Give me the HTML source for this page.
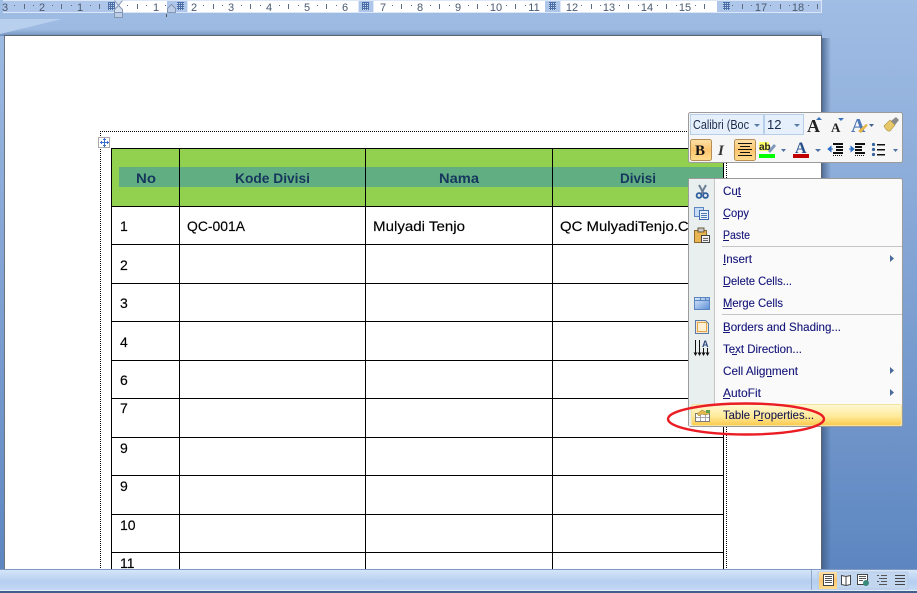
<!DOCTYPE html>
<html><head><meta charset="utf-8"><style>
html,body{margin:0;padding:0;width:917px;height:593px;overflow:hidden;background:#9db9e2}
svg{display:block;position:absolute;left:0;top:0}
text{font-family:"Liberation Sans",sans-serif}
.r{font-size:11px;fill:#4a5a70;text-anchor:middle}
.c{font-size:14px;fill:#000;stroke:#000;stroke-width:.15}
.h{font-size:14px;font-weight:bold;fill:#17365d}
.m{font-size:12px;fill:#15157a;stroke:#15157a;stroke-width:.12}
.x{shape-rendering:crispEdges}
</style></head><body>
<svg width="917" height="593" viewBox="0 0 917 593" xmlns="http://www.w3.org/2000/svg">
<defs>
<linearGradient id="bg" x1="0" y1="0" x2="0" y2="1"><stop offset="0" stop-color="#a0bde4"/><stop offset=".5" stop-color="#7fa1d2"/><stop offset="1" stop-color="#5a84bf"/></linearGradient>
<linearGradient id="st" x1="0" y1="0" x2="0" y2="1"><stop offset="0" stop-color="#d6e5f8"/><stop offset=".5" stop-color="#b5cff0"/><stop offset="1" stop-color="#c8dcf6"/></linearGradient>
<linearGradient id="hl" x1="0" y1="0" x2="0" y2="1"><stop offset="0" stop-color="#fff8d4"/><stop offset=".55" stop-color="#ffeb9c"/><stop offset="1" stop-color="#fbc94c"/></linearGradient>
<linearGradient id="btn" x1="0" y1="0" x2="0" y2="1"><stop offset="0" stop-color="#fde0a8"/><stop offset=".5" stop-color="#fcc56f"/><stop offset="1" stop-color="#ffdc8e"/></linearGradient>
<linearGradient id="ic" x1="0" y1="0" x2="1" y2="1"><stop offset="0" stop-color="#dfeafa"/><stop offset="1" stop-color="#5c8fd8"/></linearGradient>
<linearGradient id="shd" x1="0" y1="0" x2="1" y2="0"><stop offset="0" stop-color="#3e5a82" stop-opacity=".75"/><stop offset="1" stop-color="#3e5a82" stop-opacity="0"/></linearGradient>
<linearGradient id="shb" x1="0" y1="0" x2="0" y2="1"><stop offset="0" stop-color="#84a2cc" stop-opacity="0"/><stop offset="1" stop-color="#6d8cb8"/></linearGradient>
<pattern id="gp" width="2" height="2" patternUnits="userSpaceOnUse"><rect width="2" height="2" fill="#4a6ea5"/><rect width="1" height="1" x="1" y="1" fill="#c5d6ee"/></pattern>
</defs>

<!-- background -->
<rect width="917" height="593" fill="url(#bg)"/>
<rect x="0" y="29" width="822" height="7" fill="url(#shb)"/>
<polygon points="0,19 62,19 0,34" fill="#b9cfee"/>

<!-- ruler -->
<g class="x">
<rect x="3" y="0" width="819" height="13" fill="#dbe7f7"/>
<rect x="3" y="1" width="112" height="11" fill="#aec6ea"/>
<rect x="120" y="1" width="47" height="11" fill="#fff"/>
<rect x="167" y="1" width="20" height="11" fill="#aec6ea"/>
<rect x="188" y="1" width="170" height="11" fill="#fff"/>
<rect x="359" y="1" width="14" height="11" fill="#aec6ea"/>
<rect x="374" y="1" width="171" height="11" fill="#fff"/>
<rect x="545" y="1" width="15" height="11" fill="#aec6ea"/>
<rect x="561" y="1" width="156" height="11" fill="#fff"/>
<rect x="717" y="1" width="104" height="11" fill="#aec6ea"/>
</g>
<text class="r" x="5" y="11">3</text><text class="r" x="42" y="11">2</text><text class="r" x="80" y="11">1</text>
<text class="r" x="156" y="11">1</text><text class="r" x="194" y="11">2</text><text class="r" x="231" y="11">3</text><text class="r" x="269" y="11">4</text><text class="r" x="307" y="11">5</text><text class="r" x="345" y="11">6</text>
<text class="r" x="383" y="11">7</text><text class="r" x="420" y="11">8</text><text class="r" x="458" y="11">9</text><text class="r" x="496" y="11">10</text><text class="r" x="534" y="11">11</text>
<text class="r" x="572" y="11">12</text><text class="r" x="609" y="11">13</text><text class="r" x="647" y="11">14</text><text class="r" x="685" y="11">15</text>
<text class="r" x="761" y="11">17</text><text class="r" x="798" y="11">18</text>
<path class="x" d="M24.500 4v5M61.500 4v5M99.500 4v5M137.500 4v5M213.500 4v5M250.500 4v5M288.500 4v5M326.500 4v5M401.500 4v5M439.500 4v5M477.500 4v5M515.500 4v5M591.500 4v5M628.500 4v5M666.500 4v5M704.500 4v5M742.500 4v5M780.500 4v5M817.500 4v5" stroke="#5d6b80"/>
<path class="x" d="M14 5.500h1M33 5.500h1M52 5.500h1M71 5.500h1M90 5.500h1M127 5.500h1M146 5.500h1M165 5.500h1M203 5.500h1M222 5.500h1M241 5.500h1M260 5.500h1M279 5.500h1M298 5.500h1M317 5.500h1M336 5.500h1M392 5.500h1M411 5.500h1M430 5.500h1M449 5.500h1M468 5.500h1M487 5.500h1M506 5.500h1M525 5.500h1M581 5.500h1M600 5.500h1M619 5.500h1M638 5.500h1M657 5.500h1M676 5.500h1M695 5.500h1M732 5.500h1M751 5.500h1M770 5.500h1M789 5.500h1M808 5.500h1" stroke="#5d6b80"/>
<g class="x" fill="url(#gp)">
<rect x="108" y="2" width="7" height="8"/>
<rect x="177" y="2" width="7" height="8"/>
<rect x="362" y="2" width="7" height="8"/>
<rect x="549" y="2" width="7" height="8"/>
<rect x="723" y="2" width="7" height="8"/>
</g>
<path d="M114.500 0.500l4 5 4-5M114.500 12.500v-3l4-4 4 4v3z" fill="#d5e0f0" stroke="#8496b2"/>
<rect x="114.500" y="12.500" width="8" height="5" fill="#bccde6" stroke="#8496b2"/>
<path d="M167.500 12.500v-4l4-4 4 4v4z" fill="#bccde6" stroke="#8496b2"/>
<path class="x" d="M166.500 14v3" stroke="#555"/>

<!-- page -->
<rect x="822" y="38" width="9" height="532" fill="url(#shd)"/>
<rect x="4.500" y="35.500" width="817" height="540" fill="#fff" stroke="#5c6470"/>
<rect x="4" y="37" width="1" height="533" fill="#6d7480"/>

<!-- table selection dotted frame -->
<path class="x" d="M100 131.500H727M100.500 131V570M726.500 131V570" fill="none" stroke="#000" stroke-width="1" stroke-dasharray="1 1"/>
<rect x="98.500" y="137.500" width="11" height="10" fill="#fff" stroke="#a9a9a9"/>
<path class="x" d="M104.500 138v9M100 142.500h9M103 139.500h3M103 145.500h3M101.500 141v3M107.500 141v3" stroke="#3a6fcf" stroke-width="1" fill="none"/>

<!-- table -->
<g class="x">
<rect x="112" y="149" width="612" height="57" fill="#92d050"/>
<rect x="119" y="167" width="605" height="20" fill="#60ae82"/>
<path d="M111 148.500H724M111 206.500H724M111 244.500H724M111 283.500H724M111 321.500H724M111 360.500H724M111 398.500H724M111 437.500H724M111 475.500H724M111 514.500H724M111 552.500H724M111.500 148V570M179.500 148V570M365.500 148V570M552.500 148V570M723.500 148V570" stroke="#000" stroke-width="1" fill="none"/>
</g>
<text class="h" x="136" y="183" textLength="20" lengthAdjust="spacingAndGlyphs">No</text>
<text class="h" x="235" y="183" textLength="75" lengthAdjust="spacingAndGlyphs">Kode Divisi</text>
<text class="h" x="439" y="183" textLength="40" lengthAdjust="spacingAndGlyphs">Nama</text>
<text class="h" x="620" y="183" textLength="36" lengthAdjust="spacingAndGlyphs">Divisi</text>
<text class="c" x="120" y="231">1</text>
<text class="c" x="187" y="231" textLength="58" lengthAdjust="spacingAndGlyphs">QC-001A</text>
<text class="c" x="373" y="231" textLength="92" lengthAdjust="spacingAndGlyphs">Mulyadi Tenjo</text>
<text class="c" x="560" y="231" textLength="137" lengthAdjust="spacingAndGlyphs">QC MulyadiTenjo.Co</text>
<text class="c" x="120" y="270">2</text>
<text class="c" x="120" y="308">3</text>
<text class="c" x="120" y="347">4</text>
<text class="c" x="120" y="385">6</text>
<text class="c" x="120" y="413">7</text>
<text class="c" x="120" y="453">9</text>
<text class="c" x="120" y="491">9</text>
<text class="c" x="120" y="530">10</text>
<text class="c" x="120" y="568">11</text>

<!-- mini toolbar -->
<rect x="688.500" y="112.500" width="214" height="50" rx="2" fill="#f6f6f6" stroke="#9b9b9b"/>
<rect x="690.500" y="114.500" width="73" height="20" fill="#e5f0fc" stroke="#b8cfe9"/>
<rect x="764.500" y="114.500" width="39" height="20" fill="#e5f0fc" stroke="#b8cfe9"/>
<text x="693" y="129" style="font-size:12.500px;fill:#1c2a4a" textLength="56" lengthAdjust="spacingAndGlyphs">Calibri (Boc</text>
<text x="767" y="129" style="font-size:13px;fill:#1c2a4a">12</text>
<path d="M754 124h6l-3 3zM794 124h6l-3 3z" fill="#5b7ca6"/>
<text x="807" y="132" style="font-family:'Liberation Serif',serif;font-size:18px;font-weight:bold;fill:#222">A</text>
<path d="M816 120h6l-3-3z" fill="#3c70b8"/>
<text x="831" y="132" style="font-family:'Liberation Serif',serif;font-size:13px;font-weight:bold;fill:#222">A</text>
<path d="M838 118h6l-3 3z" fill="#3c70b8"/>
<text x="851" y="132" style="font-family:'Liberation Serif',serif;font-size:20px;font-weight:bold;fill:#4c78b8">A</text>
<path d="M858 131l8-7 2 1-7 8z" fill="#e5b54a"/>
<path d="M869 124h5l-2.500 3z" fill="#44618c"/>
<!-- brush -->
<path d="M884 126l6-6 5 5-5 6q-3 1-6-5z" fill="#e6c868" stroke="#a88c3c" stroke-width=".6"/>
<path d="M891 121l5-4 3 3-4 5z" fill="#8a8a8a"/>

<rect x="690.500" y="139.500" width="21" height="21" rx="2" fill="url(#btn)" stroke="#b58e55"/>
<text x="695" y="155" style="font-family:'Liberation Serif',serif;font-size:15px;font-weight:bold;fill:#111">B</text>
<text x="718" y="155" style="font-family:'Liberation Serif',serif;font-size:15px;font-style:italic;font-weight:bold;fill:#333">I</text>
<rect x="734.500" y="139.500" width="21" height="21" rx="2" fill="url(#btn)" stroke="#b58e55"/>
<path class="x" d="M738 143.500h14M740 146.500h10M738 149.500h14M740 152.500h10M738 155.500h14" stroke="#111"/>
<rect x="759" y="142" width="10" height="9" fill="#ffff66"/>
<text x="759" y="150" style="font-size:10px;font-weight:bold;fill:#222">ab</text>
<path d="M768 151l6-7 2 2-6 7z" fill="#7c96b8"/>
<rect x="759" y="154" width="16" height="4" fill="#00ff00"/>
<path d="M781 149h5l-2.500 3zM815 149h6l-3 3zM893 149h5l-2.500 3z" fill="#4f72a4"/>
<text x="795" y="153" style="font-family:'Liberation Serif',serif;font-size:16px;font-weight:bold;fill:#27508a">A</text>
<rect x="793" y="154" width="16" height="4" fill="#c00000"/>
<path class="x" d="M833 144h10M836 147h7M836 150h7M833 153h10" stroke="#111" stroke-width="2"/>
<path class="x" d="M833 155.500h10" stroke="#111" stroke-dasharray="1 1"/>
<path d="M828 149h5M828 149l3-2.500v5z" stroke="#2d6fc4" fill="#2d6fc4"/>
<path class="x" d="M855 144h10M855 147h7M855 150h7M855 153h10" stroke="#111" stroke-width="2"/>
<path class="x" d="M855 155.500h10" stroke="#111" stroke-dasharray="1 1"/>
<path d="M849 149h5M854 149l-3-2.500v5z" stroke="#2d6fc4" fill="#2d6fc4"/>
<path class="x" d="M877 144.500h8M877 149.500h8M877 154.500h8" stroke="#111" stroke-width="1.500"/>
<circle cx="873.500" cy="144.500" r="1.600" fill="#36629f"/><circle cx="873.500" cy="149.500" r="1.600" fill="#36629f"/><circle cx="873.500" cy="154.500" r="1.600" fill="#36629f"/>

<!-- context menu -->
<rect x="688.500" y="178.500" width="214" height="248" rx="2" fill="#fafafa" stroke="#9b9b9b"/>
<rect x="689" y="179" width="25" height="247" fill="#e9eeee"/>
<rect x="714" y="179" width="1" height="247" fill="#c5c5c5"/>
<rect x="722" y="246" width="180" height="1" fill="#c5c5c5"/>
<rect x="722" y="314" width="180" height="1" fill="#c5c5c5"/>
<rect x="691.500" y="404.500" width="210" height="21" rx="2" fill="url(#hl)" stroke="#f5e3a0"/>

<!-- items -->
<text class="m" x="723" y="195" textLength="18" lengthAdjust="spacingAndGlyphs">Cut</text>
<text class="m" x="723" y="217" textLength="26" lengthAdjust="spacingAndGlyphs">Copy</text>
<text class="m" x="723" y="239" textLength="27" lengthAdjust="spacingAndGlyphs">Paste</text>
<text class="m" x="723" y="263" textLength="29" lengthAdjust="spacingAndGlyphs">Insert</text>
<text class="m" x="723" y="285" textLength="69" lengthAdjust="spacingAndGlyphs">Delete Cells...</text>
<text class="m" x="723" y="307" textLength="60" lengthAdjust="spacingAndGlyphs">Merge Cells</text>
<text class="m" x="723" y="331" textLength="118" lengthAdjust="spacingAndGlyphs">Borders and Shading...</text>
<text class="m" x="723" y="353" textLength="79" lengthAdjust="spacingAndGlyphs">Text Direction...</text>
<text class="m" x="723" y="375" textLength="75" lengthAdjust="spacingAndGlyphs">Cell Alignment</text>
<text class="m" x="723" y="397" textLength="38" lengthAdjust="spacingAndGlyphs">AutoFit</text>
<text class="m" x="723" y="419" textLength="91" lengthAdjust="spacingAndGlyphs" style="fill:#1a1a50;stroke:#1a1a50">Table Properties...</text>
<!-- mnemonic underlines -->
<path class="x" d="M737 196.500h4M723 218.500h6M723 240.500h6M723 264.500h3M723 286.500h7M723 308.500h9M723 332.500h7M732 354.500h5M767 376.500h5M723 398.500h7M758 420.500h5" stroke="#15157a" fill="none"/>
<!-- arrows -->
<path d="M890 255v7l4-3.500zM890 367v7l4-3.500zM890 389v7l4-3.500z" fill="#4a6a9c"/>

<!-- menu icons -->
<!-- scissors -->
<path d="M699 185l5 9M706 185l-5 9" stroke="#6d7f96" stroke-width="2"/>
<circle cx="699" cy="195.500" r="2.400" fill="none" stroke="#2f5f9e" stroke-width="1.800"/><circle cx="705.500" cy="195.500" r="2.400" fill="none" stroke="#2f5f9e" stroke-width="1.800"/>
<!-- copy -->
<rect x="694.500" y="207.500" width="9" height="9" fill="#c8dcf6" stroke="#5e86c0"/>
<rect x="699.500" y="210.500" width="9" height="9" fill="#eaf2fc" stroke="#3f6cad"/>
<path class="x" d="M701 213.500h6M701 215.500h6M701 217.500h6" stroke="#4f7ab8"/>
<!-- paste -->
<rect x="694.500" y="230.500" width="12" height="12" fill="#e8b552" stroke="#8d6b2c"/>
<rect x="698" y="228" width="6" height="4" fill="#c9c9c9" stroke="#6c5a36"/>
<rect x="701.500" y="235.500" width="8" height="7" fill="#f0f0f0" stroke="#444"/>
<path class="x" d="M703 238.500h5M703 240.500h5" stroke="#666"/>
<!-- merge cells -->
<rect x="694.500" y="297.500" width="15" height="12" fill="url(#ic)" stroke="#5a86bf"/>
<path class="x" d="M695 300.500h14M700.500 298v2M705.500 298v2" stroke="#5a86bf"/>
<!-- borders -->
<path d="M695.500 320.500h10l3 3v10h-13z" fill="#fbe8c8" stroke="#5b7ba6"/>
<rect x="697.500" y="322.500" width="9" height="9" fill="#fff0d4" stroke="#e3a34a"/>
<!-- text direction -->
<path class="x" d="M695.500 340v14M699.500 340v14M703.500 348v6M707.500 348v6" stroke="#111"/>
<path d="M693.500 352.500l2 3.500 2-3.500zM697.500 352.500l2 3.500 2-3.500zM701.500 352.500l2 3.500 2-3.500zM705.500 352.500l2 3.500 2-3.500z" fill="#111"/>
<text x="702" y="347" style="font-size:9px;font-weight:bold;fill:#2b4a7a">A</text>
<!-- table props -->
<rect x="695.500" y="413.500" width="14" height="8" fill="#fff" stroke="#7b7b7b"/>
<path class="x" d="M700.500 414v7M705.500 414v7M696 417.500h13" stroke="#a8a8a8"/>
<path d="M697 414l5-4 4 2 4-1-1 3-4 1-3-1-3 2z" fill="#e4b94f" stroke="#8a7a3a" stroke-width=".5"/>
<path d="M706 410h4v3h-4z" fill="#5ea34a"/>

<!-- red ellipse -->
<ellipse cx="746" cy="419" rx="78" ry="15.500" fill="none" stroke="#ea1c24" stroke-width="2.400"/>

<!-- status bar -->
<rect x="0" y="570" width="917" height="23" fill="url(#st)"/>
<rect x="0" y="569" width="917" height="1" fill="#7d99c0"/>
<rect x="0" y="590" width="917" height="1" fill="#e4eefb"/>
<rect x="0" y="591" width="917" height="2" fill="#3f5f8c"/>
<rect x="811" y="570" width="1" height="20" fill="#8fa8ca"/>
<rect x="818" y="572" width="90" height="17" fill="#c3d6ef" stroke="#a6bcd9" stroke-width=".5"/>
<rect x="819" y="572" width="18" height="17" fill="url(#btn)"/>
<!-- view icons -->
<rect x="823.500" y="574.500" width="10" height="11" fill="#fff" stroke="#444"/>
<path class="x" d="M825 576.500h7M825 578.500h7M825 580.500h7M825 582.500h7" stroke="#555"/>
<path d="M841.500 575.500l4.500 1 4.500-1v9l-4.500 1-4.500-1zM846 576.500v9" fill="#fff" stroke="#444"/>
<rect x="857.500" y="574.500" width="10" height="10" fill="#fff" stroke="#444"/>
<path class="x" d="M859 576.500h7M859 578.500h7M859 580.500h4" stroke="#555"/>
<circle cx="866" cy="583" r="3" fill="#3a8a7c"/>
<path class="x" d="M877 575.500h2M881 575.500h6M879 578.500h8M877 581.500h2M881 581.500h6M879 584.500h8" stroke="#555"/>
<path class="x" d="M895 575.500h10M895 578.500h10M895 581.500h10M895 584.500h10" stroke="#444"/>
</svg>
</body></html>
